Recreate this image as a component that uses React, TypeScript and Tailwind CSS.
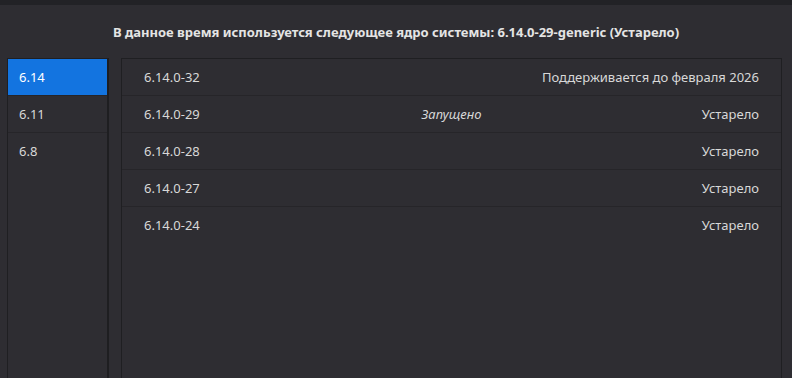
import React from "react";

const branches = ["6.14", "6.11", "6.8"];

const kernels = [
  { version: "6.14.0-32", running: false, status: "Поддерживается до февраля 2026" },
  { version: "6.14.0-29", running: true, status: "Устарело" },
  { version: "6.14.0-28", running: false, status: "Устарело" },
  { version: "6.14.0-27", running: false, status: "Устарело" },
  { version: "6.14.0-24", running: false, status: "Устарело" },
];

export default function App() {
  return (
    <div className="w-[792px] h-[378px] overflow-hidden bg-[#2e2d32] text-[#d8d8d8] font-['Noto_Sans',sans-serif] text-[13px] flex flex-col">
      <div className="h-[5px] shrink-0 bg-[#222226]" />
      <div className="h-[53px] shrink-0 flex items-center justify-center font-bold text-[13px] text-[#e4e4e4] pt-[3px]">
        В данное время используется следующее ядро системы: 6.14.0-29-generic (Устарело)
      </div>
      <div className="flex flex-1 pl-[7px] pr-[10px] gap-[12px]">
        <div className="w-[102px] border-l border-t border-[#1f1f22] border-r-2 border-r-[#1e1e21] flex flex-col">
          {branches.map((b, i) => (
            <div
              key={b}
              className={
                "h-[37px] pl-[11px] pt-[1px] flex items-center border-b border-[#262529] last:border-b-0 " +
                (i === 0 ? "bg-[#1374e0] text-white" : "")
              }
            >
              {b}
            </div>
          ))}
        </div>
        <div className="flex-1 border-l border-r border-t border-[#1f1f22] flex flex-col">
          {kernels.map((k) => (
            <div
              key={k.version}
              className="h-[37px] px-[22px] pt-[1px] grid grid-cols-[1fr_auto_1fr] items-center border-b border-[#262529] last:border-b-0"
            >
              <span>{k.version}</span>
              <span className="text-center italic">{k.running ? "Запущено" : ""}</span>
              <span className="text-right whitespace-nowrap">{k.status}</span>
            </div>
          ))}
        </div>
      </div>
    </div>
  );
}
